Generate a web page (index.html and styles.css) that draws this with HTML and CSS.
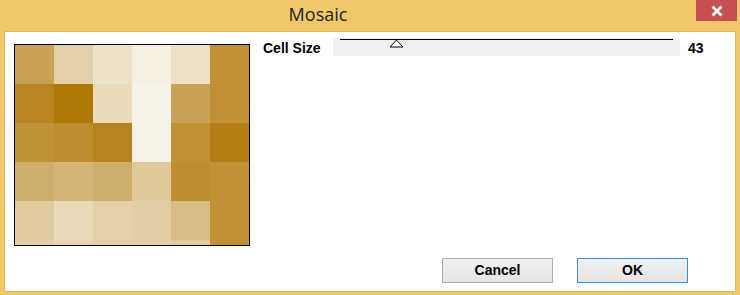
FILE: index.html
```html
<!DOCTYPE html>
<html lang="en">

<head>
    <meta charset="UTF-8">
    <title>Mosaic</title>
    <link rel="stylesheet" href="styles.css">
</head>

<body>
    <div class="window">
        <div class="title-bar">
            <div class="title">Mosaic</div>
            <a href="javascript:;" class="close-btn">
                <svg width="14" height="12" viewBox="0 0 14 12">
                    <path d="M2.5 1.5 L11.5 10.5 M11.5 1.5 L2.5 10.5" stroke="#fff" stroke-width="2.8" fill="none" />
                </svg>
            </a>
        </div>
        <div class="client">
            <div class="main">
                <!-- preview -->
                <div class="preview">
                    <div class="cell" style="background:#c9a155"></div>
                    <div class="cell" style="background:#e3d0a8"></div>
                    <div class="cell" style="background:#ede2c8"></div>
                    <div class="cell" style="background:#f5efe2"></div>
                    <div class="cell" style="background:#ede2c9"></div>
                    <div class="cell" style="background:#c09235"></div>

                    <div class="cell" style="background:#b98520"></div>
                    <div class="cell" style="background:#b07808"></div>
                    <div class="cell" style="background:#ebdbb8"></div>
                    <div class="cell" style="background:#f7f2e8"></div>
                    <div class="cell" style="background:#c9a155"></div>
                    <div class="cell" style="background:#c09235"></div>

                    <div class="cell" style="background:#c09339"></div>
                    <div class="cell" style="background:#bc8d2f"></div>
                    <div class="cell" style="background:#b8831f"></div>
                    <div class="cell" style="background:#f6f1e6"></div>
                    <div class="cell" style="background:#c09235"></div>
                    <div class="cell" style="background:#b67c15"></div>

                    <div class="cell" style="background:#cfae6b"></div>
                    <div class="cell" style="background:#d4b577"></div>
                    <div class="cell" style="background:#cfad6b"></div>
                    <div class="cell" style="background:#dfc899"></div>
                    <div class="cell" style="background:#be8e31"></div>
                    <div class="cell" style="background:#c09235"></div>

                    <div class="cell" style="background:#e0cb9e"></div>
                    <div class="cell" style="background:#e9dbba"></div>
                    <div class="cell" style="background:#e3d0a9"></div>
                    <div class="cell" style="background:#e1cda3"></div>
                    <div class="cell" style="background:#d8bd86"></div>
                    <div class="cell" style="background:#c09235"></div>

                    <div class="cell" style="background:#e3d0a9"></div>
                    <div class="cell" style="background:#e6d5b0"></div>
                    <div class="cell" style="background:#e3d0a9"></div>
                    <div class="cell" style="background:#e3d0a9"></div>
                    <div class="cell" style="background:#e0cb9e"></div>
                    <div class="cell" style="background:#c09235"></div>
                </div>
                <!-- settings -->
                <div class="settings">
                    <div class="setting-row">
                        <label>Cell Size</label>
                        <div class="slider">
                            <div class="slider-line"></div>
                            <svg class="slider-thumb" width="15" height="9" viewBox="0 0 15 9">
                                <path d="M7.5 1 L14 8 L1 8 Z" fill="#fff" stroke="#000" stroke-width="1" />
                            </svg>
                        </div>
                        <span class="value">43</span>
                    </div>
                </div>
            </div>
            <div class="buttons">
                <a href="javascript:;" class="btn">Cancel</a>
                <a href="javascript:;" class="btn btn-default">OK</a>
            </div>
        </div>
    </div>
</body>

</html>
```

FILE: styles.css
```css
body,
div,
span,
a,
label {
    padding: 0px;
    margin: 0px;
}

body {
    font-family: "Liberation Sans", Arial, sans-serif;
    background: #f0c86a;
}

a {
    text-decoration: none;
    color: #000;
}

.window {
    width: 740px;
    height: 295px;
    background: #f0c86a;
    display: flex;
    flex-direction: column;
}

.title-bar {
    height: 31px;
    display: flex;
    position: relative;
}

.title {
    flex: 1;
    text-align: center;
    padding-right: 104px;
    font-family: "Open Sans", "Noto Sans", sans-serif;
    font-size: 18px;
    line-height: 28px;
    color: #222;
}

.close-btn {
    position: absolute;
    right: 3px;
    top: 0;
    width: 41px;
    height: 21px;
    background: #c75050;
    display: flex;
    align-items: center;
    justify-content: center;
}

.client {
    height: 259px;
    margin: 0 4px;
    background: #fff;
    border: 1px solid #ddb862;
    display: flex;
    flex-direction: column;
}

.main {
    flex: 1;
    display: flex;
    padding: 12px 0 0 9px;
}

.preview {
    width: 234px;
    height: 200px;
    border: 1px solid #000;
    display: grid;
    grid-template-columns: repeat(6, 39px);
    grid-template-rows: repeat(5, 39px) 5px;
    overflow: hidden;
}

.settings {
    flex: 1;
    padding: 0 0 0 13px;
}

.setting-row {
    display: flex;
    align-items: flex-start;
    margin-top: -6px;
}

.setting-row label {
    font-size: 14px;
    font-weight: bold;
    width: 70px;
    line-height: 17px;
    padding-top: 2px;
}

.slider {
    position: relative;
    width: 347px;
    height: 18px;
    background: #f0f0f0;
}

.slider-line {
    position: absolute;
    left: 7px;
    right: 7px;
    top: 1px;
    height: 1px;
    background: #000;
}

.slider-thumb {
    position: absolute;
    left: 56px;
    top: 1px;
}

.value {
    font-size: 14px;
    font-weight: bold;
    padding: 2px 0 0 8px;
    line-height: 17px;
}

.buttons {
    display: flex;
    justify-content: flex-end;
    gap: 24px;
    padding: 0 47px 8px 0;
}

.btn {
    width: 109px;
    height: 23px;
    border: 1px solid #acacac;
    background: linear-gradient(#f0f0f0, #e5e5e5);
    text-align: center;
    line-height: 23px;
    font-size: 14px;
    font-weight: bold;
}

.btn-default {
    border-color: #3c8fe0;
}
```
